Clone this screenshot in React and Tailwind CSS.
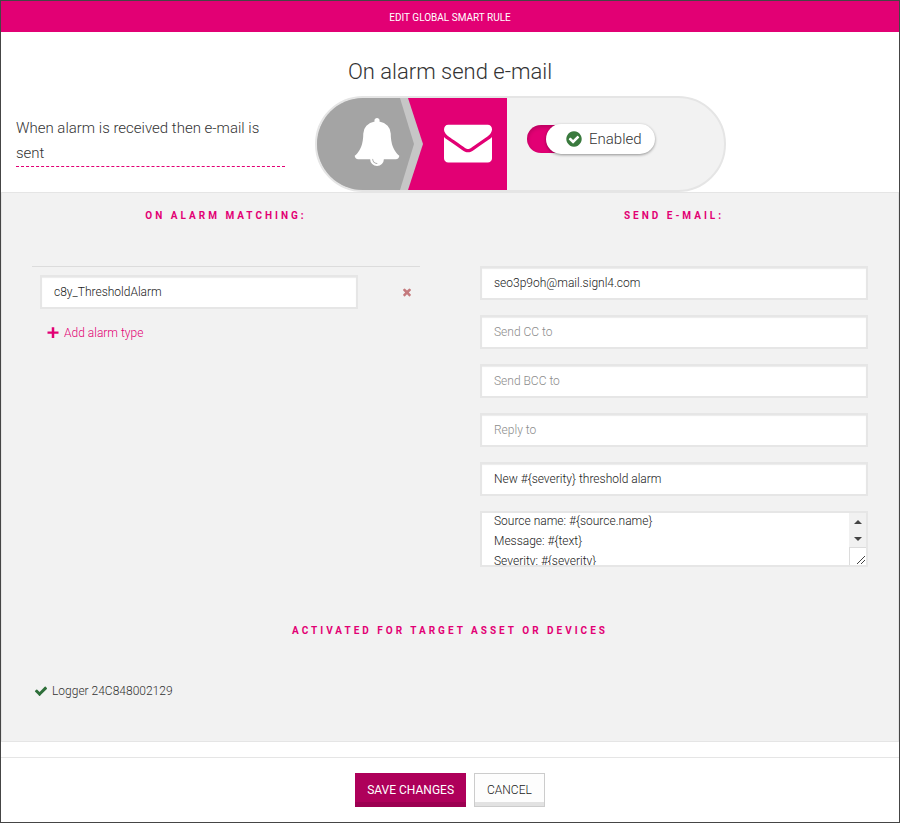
import { useEffect, useRef } from "react";

const ICONS = {
  bell: "M912 1696q0-16-16-16-59 0-101.5-42.5t-42.5-101.5q0-16-16-16t-16 16q0 73 51.5 124.5t124.5 51.5q16 0 16-16zm816-288q0 52-38 90t-90 38h-448q0 106-75 181t-181 75-181-75-75-181h-448q-52 0-90-38t-38-90q50-42 91-88t85-119.5 74.5-158.5 50-206 19.5-260q0-152 117-282.5t307-158.5q-8-19-8-39 0-40 28-68t68-28 68 28 28 68q0 20-8 39 190 28 307 158.5t117 282.5q0 139 19.5 260t50 206 74.5 158.5 85 119.5 91 88z",
  envelope:
    "M1792 710v794q0 66-47 113t-113 47h-1472q-66 0-113-47t-47-113v-794q44 49 101 87 362 246 497 345 57 42 92.5 65.5t94.5 48 110 24.5h2q51 0 110-24.5t94.5-48 92.5-65.5q170-123 498-345 57-39 100-87zm0-294q0 79-49 151t-122 123q-376 261-468 325-10 7-42.5 31t-54 38.5-52 32.5-57.5 27-50 9h-2q-23 0-50-9t-57.5-27-52-32.5-54-38.5-42.5-31q-91-64-262-182.5t-205-142.5q-62-42-117-115.5t-55-136.5q0-78 41.5-130t118.5-52h1472q65 0 112.5 47t47.5 113z",
  checkCircle:
    "M1412 734q0-28-18-46l-91-90q-19-19-45-19t-45 19l-408 407-226-226q-19-19-45-19t-45 19l-91 90q-18 18-18 46 0 27 18 45l362 362q19 19 45 19 27 0 46-19l543-543q18-18 18-45zm252 162q0 209-103 385.5t-279.5 279.5-385.5 103-385.5-103-279.5-279.5-103-385.5 103-385.5 279.5-279.5 385.5-103 385.5 103 279.5 279.5 103 385.5z",
  check:
    "M1671 566q0 40-28 68l-724 724-136 136q-28 28-68 28t-68-28l-136-136-362-362q-28-28-28-68t28-68l136-136q28-28 68-28t68 28l294 295 656-657q28-28 68-28t68 28l136 136q28 28 28 68z",
  times:
    "M1490 1322q0 40-28 68l-136 136q-28 28-68 28t-68-28l-294-294-294 294q-28 28-68 28t-68-28l-136-136q-28-28-28-68t28-68l294-294-294-294q-28-28-28-68t28-68l136-136q28-28 68-28t68 28l294 294 294-294q28-28 68-28t68 28l136 136q28 28 28 68t-28 68l-294 294 294 294q28 28 28 68z",
  plus: "M1600 704v288h-544v544h-320v-544h-544v-288h544v-544h320v544z",
};

function Icon({ name, className }) {
  return (
    <svg viewBox="0 0 1792 1792" className={className} fill="currentColor" aria-hidden="true">
      <path d={ICONS[name]} />
    </svg>
  );
}

const field =
  "block h-[34px] w-full border-2 border-[#e6e6e6] bg-white px-3 text-[12px] font-light text-[#222] shadow-[inset_0_1px_1px_rgba(0,0,0,0.08)] outline-none placeholder:text-[#8c8c8c]";

function SectionTitle({ children }) {
  return (
    <h2 className="text-center text-[10px] leading-5 font-bold tracking-[3px] text-[#e20074] uppercase">
      {children}
    </h2>
  );
}

function RuleBadge() {
  return (
    <div className="flex h-[96px] w-[411px] shrink-0 overflow-hidden rounded-full border-2 border-[#e5e5e5] bg-[#f2f2f2]">
      <svg viewBox="0 0 190 92" className="h-[92px] w-[190px] shrink-0" aria-hidden="true">
        <rect x="50" width="140" height="92" fill="#e20074" />
        <path d="M0 0H91L106 46L91 92H0Z" fill="#c6c6c6" />
        <path d="M0 0H83L97 46L83 92H0Z" fill="#a4a4a4" />
        <g fill="#fff">
          <path transform="translate(36 20) scale(0.0268)" d={ICONS.bell} />
          <path transform="translate(127 20) scale(0.0268)" d={ICONS.envelope} />
        </g>
      </svg>
      <label className="ml-5 mt-[26px] flex h-[30px] cursor-pointer items-center">
        <input type="checkbox" defaultChecked className="sr-only" />
        <span className="h-7 w-10 rounded-l-full bg-[#e20074] shadow-[inset_0_2px_4px_rgba(0,0,0,0.2)]" />
        <span className="-ml-[21px] flex h-[30px] items-center gap-[6px] rounded-full bg-white pr-[13px] pl-[19px] text-[15px] font-light text-[#333] shadow-[0_1px_3px_rgba(0,0,0,0.4)]">
          <Icon name="checkCircle" className="size-[18px] text-[#3a7a3e]" />
          Enabled
        </span>
      </label>
    </div>
  );
}

const mailFields = [
  { label: "Send to", value: "seo3p9oh@mail.signl4.com" },
  { label: "Send CC to", value: "" },
  { label: "Send BCC to", value: "" },
  { label: "Reply to", value: "" },
  { label: "Subject", value: "New #{severity} threshold alarm" },
];

function MessageBox() {
  const ref = useRef(null);
  useEffect(() => {
    ref.current.scrollTop = 8;
  }, []);
  const scroll = (step) => () => ref.current.scrollBy(0, step);
  return (
    <div className="flex h-[56px] border-2 border-[#e6e6e6] bg-white">
      <textarea
        ref={ref}
        aria-label="Message"
        className="h-full min-w-0 flex-1 resize-none overflow-hidden px-3 py-[6px] text-[12px] leading-5 font-light text-[#222] outline-none"
        defaultValue={"Source name: #{source.name}\nMessage: #{text}\nSeverity: #{severity}"}
      />
      <div className="flex w-[17px] flex-col bg-[#f1f1f1] text-[#444]">
        <button type="button" aria-label="Scroll up" onClick={scroll(-20)} className="flex h-[17px] items-center justify-center">
          <svg viewBox="0 0 8 4" className="h-1 w-2" fill="currentColor"><path d="M0 4L4 0L8 4Z" /></svg>
        </button>
        <button type="button" aria-label="Scroll down" onClick={scroll(20)} className="flex h-[17px] items-center justify-center">
          <svg viewBox="0 0 8 4" className="h-1 w-2" fill="currentColor"><path d="M0 0L4 4L8 0Z" /></svg>
        </button>
        <div className="flex flex-1 items-end justify-end border-t border-l border-[#dcdcdc] bg-white p-px">
          <svg viewBox="0 0 8 8" className="size-2" stroke="currentColor" fill="none"><path d="M0 8L8 0M4 8L8 4" /></svg>
        </div>
      </div>
    </div>
  );
}

export default function App() {
  return (
    <div className="flex min-h-screen flex-col border border-[#454545] bg-white font-['Roboto','Liberation_Sans',sans-serif] text-[#333]">
      <header className="flex h-[31px] items-center justify-center bg-[#e20074] pt-[2px] text-[10px] text-white uppercase">
        Edit global smart rule
      </header>

      <h1 className="mt-5 text-center text-[22px] leading-10 font-light">On alarm send e-mail</h1>

      <div className="mt-1 flex pl-[15px]">
        <textarea
          aria-label="Rule description"
          rows={2}
          className="mt-5 mr-[30px] block h-[51px] w-[269px] resize-none overflow-hidden border-b border-dashed border-[#e20074] text-[15px] leading-[25px] font-light outline-none"
          defaultValue="When alarm is received then e-mail is sent"
        />
        <RuleBadge />
      </div>

      <main className="flex-1 border border-[#e5e5e5] bg-[#f2f2f2]">
        <div className="grid grid-cols-2">
          <section className="pt-[13px]">
            <SectionTitle>On alarm matching:</SectionTitle>
            <div className="mx-[30px] mt-10 border-t border-[#dcdcdc] pt-2">
              <div className="flex items-center pl-2">
                <input aria-label="Alarm type" className={`${field} flex-1`} defaultValue="c8y_ThresholdAlarm" />
                <button type="button" aria-label="Remove alarm type" className="mr-[6px] ml-[42px] flex size-[14px] items-center justify-center text-[#c47a7d]">
                  <Icon name="times" className="size-[12px]" />
                </button>
              </div>
              <button type="button" className="mt-[14px] ml-[14px] flex items-center gap-1 text-[12px] leading-5 font-light text-[#e20074]">
                <Icon name="plus" className="size-[14px]" />
                Add alarm type
              </button>
            </div>
          </section>

          <section className="pt-[13px]">
            <SectionTitle>Send e-mail:</SectionTitle>
            <div className="mx-[30px] mt-10 flex flex-col gap-[15px]">
              {mailFields.map((f) => (
                <input key={f.label} aria-label={f.label} placeholder={f.label} className={field} defaultValue={f.value} />
              ))}
              <MessageBox />
            </div>
          </section>
        </div>

        <section className="pt-[54px] pb-10">
          <SectionTitle>Activated for target asset or devices</SectionTitle>
          <p className="mt-10 flex items-center gap-1 pl-8 text-[12px] leading-5 font-light">
            <Icon name="check" className="size-[14px] text-[#2f6f3a]" />
            Logger 24C848002129
          </p>
        </section>
      </main>

      <footer className="mt-[15px] flex justify-center gap-2 border-t border-[#e5e5e5] py-[15px] text-[12px] uppercase">
        <button type="button" className="h-[34px] bg-[#ae005a] px-3 text-white shadow-[inset_0_-5px_0_#9c0051]">
          SAVE CHANGES
        </button>
        <button type="button" className="h-[34px] border border-[#ccc] bg-[#fdfdfd] px-3 font-light text-[#222] shadow-[inset_0_-4px_0_#e2e2e2]">
          CANCEL
        </button>
      </footer>
    </div>
  );
}
